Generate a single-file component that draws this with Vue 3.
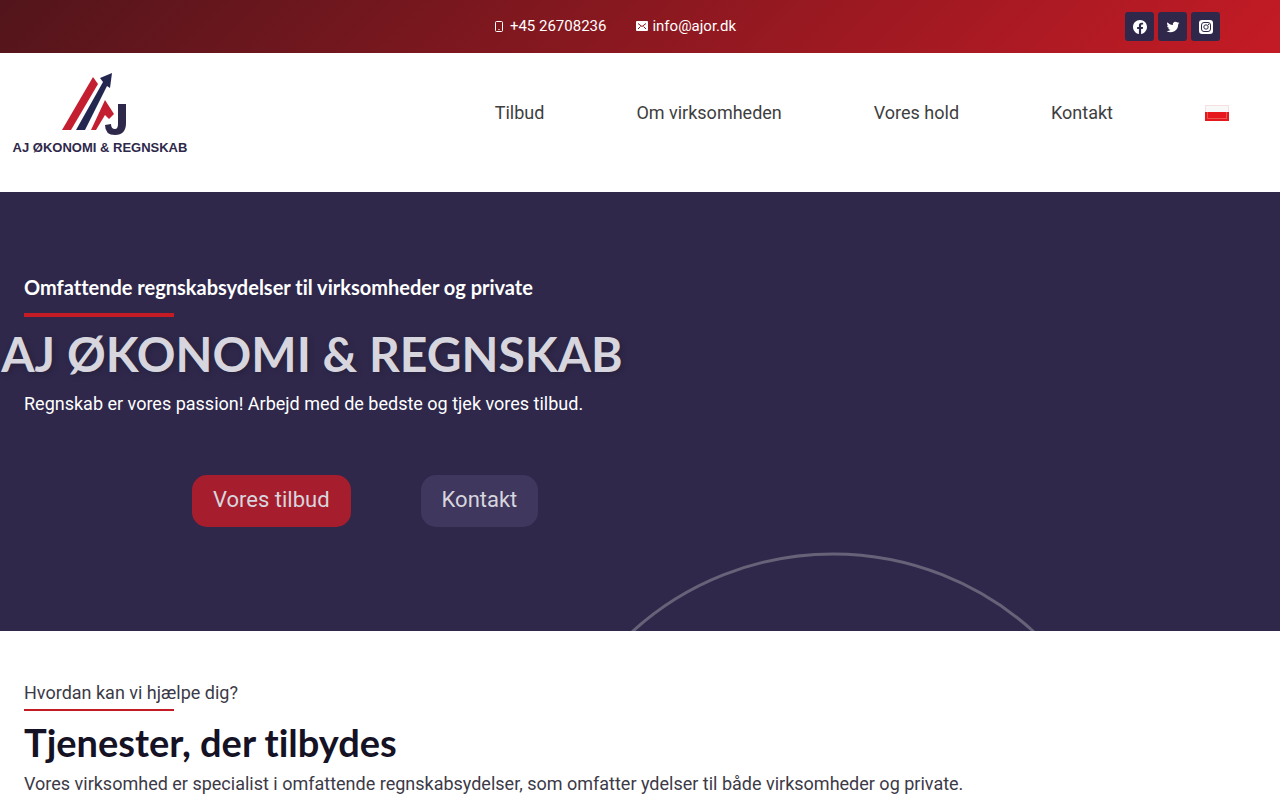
<template>
  <div class="page">
    <div class="top-bar">
      <div class="contact">
        <a href="tel:+4526708236">
          <svg viewBox="0 0 12 14" width="12" height="14">
            <rect x="1.500" y="2.500" width="7" height="10" rx="1" fill="none" stroke="#fff" stroke-width="1" />
            <path d="M4 10.500h2" stroke="#fff" stroke-width="1" opacity="0.6" />
          </svg>
          +45 26708236
        </a>
        <a href="mailto:info@ajor.dk">
          <svg viewBox="0 0 12 14" width="12" height="14">
            <rect x="0" y="2" width="12" height="10" rx="1" fill="#fff" />
            <path d="M2 4.500l4 3 4-3M2 10l2.500-2.500M10 10l-2.500-2.500" fill="none" stroke="#8a1820" stroke-width="1" />
          </svg>
          info@ajor.dk
        </a>
      </div>
      <div class="social">
        <a v-for="s in socials" :key="s.name" :href="s.href" :aria-label="s.name">
          <svg :viewBox="s.box" width="14" height="14"><path :d="s.path" fill="#fff" /></svg>
        </a>
        <a href="#instagram" aria-label="Instagram">
          <svg viewBox="0 0 14 14" width="14" height="14">
            <rect width="14" height="14" rx="3" fill="#fff" />
            <g fill="none" stroke="#2f284b">
              <rect x="2.500" y="2.500" width="9" height="9" rx="2.500" />
              <circle cx="7" cy="7" r="2.200" />
            </g>
            <circle cx="9.600" cy="4.400" r="0.600" fill="#2f284b" />
          </svg>
        </a>
      </div>
    </div>

    <header class="site-header">
      <a href="#" class="logo">
        <svg viewBox="0 0 200 120" width="200" height="120">
          <path d="M93 24l5 7-27 46H62z" fill="#c41f30" />
          <path d="M76 77h9l22-44 3 2 2-15-12 5 3 4z" fill="#232750" />
          <path d="M105 47l9 14-5 5-4-4-9 15H91z" fill="#c41f30" />
          <path d="M118 51h8v19q0 12-11 12-10 0-10-10l6-1q0 5 4 5 3 0 3-5z" fill="#2e284b" />
          <text x="100" y="99" text-anchor="middle">AJ ØKONOMI &amp; REGNSKAB</text>
        </svg>
      </a>
      <nav>
        <a v-for="item in menu" :key="item" href="#">{{ item }}</a>
        <a href="#" class="flag" aria-label="Polski">
          <svg viewBox="0 0 24 16" width="24" height="16">
            <rect width="24" height="7" fill="#f8dede" />
            <rect x="1" y="1" width="22" height="6" fill="#f8f8f8" />
            <rect y="7" width="24" height="9" fill="#e5191b" />
            <path d="M2.500 7v6.500h19V7" fill="none" stroke="#fff" stroke-opacity="0.25" />
          </svg>
        </a>
      </nav>
    </header>

    <section class="hero">
      <svg class="ring" viewBox="0 0 600 600" width="600" height="600">
        <circle cx="300" cy="300" r="298" fill="none" stroke="#686278" stroke-width="3" />
      </svg>
      <div class="hero-content">
        <h3>Omfattende regnskabsydelser til virksomheder og private</h3>
        <hr class="divider thick">
        <h1>AJ ØKONOMI &amp; REGNSKAB</h1>
        <p>Regnskab er vores passion! Arbejd med de bedste og tjek vores tilbud.</p>
        <div class="buttons">
          <button type="button" class="btn primary">Vores tilbud</button>
          <button type="button" class="btn secondary">Kontakt</button>
        </div>
      </div>
    </section>

    <section class="services">
      <p>Hvordan kan vi hjælpe dig?</p>
      <hr class="divider">
      <h2>Tjenester, der tilbydes</h2>
      <p>Vores virksomhed er specialist i omfattende regnskabsydelser, som omfatter ydelser til både virksomheder og private.</p>
    </section>
  </div>
</template>

<script setup>
const menu = ['Tilbud', 'Om virksomheden', 'Vores hold', 'Kontakt']

const socials = [
  {
    name: 'Facebook',
    href: '#facebook',
    box: '0 0 24 24',
    path: 'M24 12.073C24 5.446 18.627 0 12 0S0 5.446 0 12.073c0 6.026 4.388 11.021 10.125 11.927v-8.437H7.078v-3.490h3.047V9.413c0-3.026 1.792-4.697 4.533-4.697 1.312 0 2.686.236 2.686.236v2.971H15.830c-1.491 0-1.956.931-1.956 1.886v2.264h3.328l-.532 3.490h-2.796V24C19.612 23.094 24 18.099 24 12.073z'
  },
  {
    name: 'Twitter',
    href: '#twitter',
    box: '-1 -1 26 26',
    path: 'M23.954 4.569a10 10 0 0 1-2.825.775 4.958 4.958 0 0 0 2.163-2.723 9.990 9.990 0 0 1-3.127 1.184 4.920 4.920 0 0 0-8.384 4.482C7.691 8.094 4.066 6.130 1.640 3.161a4.822 4.822 0 0 0-.666 2.475c0 1.710.870 3.213 2.188 4.096a4.904 4.904 0 0 1-2.228-.616v.061a4.923 4.923 0 0 0 3.946 4.827 4.996 4.996 0 0 1-2.212.085 4.937 4.937 0 0 0 4.604 3.417A9.868 9.868 0 0 1 0 19.540a13.995 13.995 0 0 0 7.548 2.212c9.054 0 13.999-7.496 13.999-13.986 0-.209 0-.420-.015-.630a9.936 9.936 0 0 0 2.422-2.567z'
  }
]
</script>

<style>
body {
  background: #ffffff;
}
</style>

<style scoped>
.page {
  color: #3c3a47;
  font-family: Roboto, "Liberation Sans", sans-serif;
  font-size: 18px;
  font-variant-ligatures: none;
  line-height: 28px;
}

a {
  color: inherit;
  text-decoration: none;
}

h1, h2, h3, p {
  margin: 0;
}

.top-bar {
  display: grid;
  grid-template-columns: 1fr auto 1fr;
  align-items: center;
  padding: 12px 60px 12px 10px;
  background: linear-gradient(135deg, #52151b 0%, #c41b25 100%);
}

.contact {
  display: flex;
  grid-column: 2;
  gap: 30px;
  padding-bottom: 2px;
  color: #ffffff;
  font-size: 15px;
  line-height: 24px;
}

.contact a {
  display: flex;
  align-items: center;
  gap: 4px;
}

.social {
  display: flex;
  justify-content: flex-end;
  gap: 4px;
}

.social a {
  display: flex;
  align-items: center;
  justify-content: center;
  width: 29px;
  height: 29px;
  border-radius: 3px;
  background: #2f284b;
}

.site-header {
  display: flex;
  align-items: flex-start;
  justify-content: space-between;
  min-height: 139px;
}

.logo svg {
  display: block;
}

.logo text {
  fill: #2e284b;
  font-family: "Liberation Sans", sans-serif;
  font-size: 13px;
  font-weight: 700;
}

nav {
  display: flex;
  align-items: center;
  gap: 92px;
  padding: 46px 51px 0 0;
  color: #3e3e3e;
}

.flag svg {
  display: block;
}

.hero {
  position: relative;
  overflow: hidden;
  padding: 80px 24px 104px;
  background: #2f284b;
  color: #ffffff;
}

.ring {
  position: absolute;
  top: 360px;
  left: calc(50% - 107px);
}

.hero-content {
  position: relative;
  max-width: 576px;
}

.hero h3 {
  font-family: Lato, sans-serif;
  font-size: 20px;
  font-weight: 700;
  line-height: 30px;
}

.divider {
  width: 150px;
  height: 2px;
  margin: 2px 0 0;
  border: 0;
  background: #c41b25;
}

.divider.thick {
  height: 4px;
  margin: 11px 0;
}

.hero h1 {
  display: flex;
  justify-content: center;
  color: #d7d5dd;
  font-family: Lato, sans-serif;
  font-size: 48px;
  font-weight: 700;
  line-height: 52px;
  text-shadow: 2px 2px 6px rgba(0, 0, 0, 0.2);
  white-space: nowrap;
}

.hero p {
  margin-top: 10px;
}

.buttons {
  display: flex;
  gap: 70px;
  margin: 57px 0 0 168px;
}

.btn {
  height: 52px;
  padding: 0 21px 2px;
  border: 0;
  border-radius: 15px;
  color: #d7d5dd;
  font-family: inherit;
  font-size: 22px;
  line-height: 48px;
  cursor: pointer;
}

.btn.primary {
  background: #a61e2d;
}

.btn.secondary {
  background: #3f375e;
}

.services {
  padding: 48px 24px 0;
}

.services h2 {
  margin: 8px 0 5px;
  color: #141224;
  font-family: Lato, sans-serif;
  font-size: 38px;
  font-weight: 700;
  line-height: 46px;
}
</style>
